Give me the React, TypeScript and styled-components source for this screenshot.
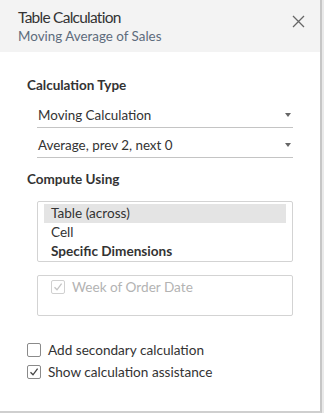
import React from "react";
import styled, { createGlobalStyle } from "styled-components";

const Global = createGlobalStyle`
  html, body { margin: 0; padding: 0; }
  body { background: #e9e9e9; font-family: Lato, "Noto Sans", sans-serif; color: #333; }
`;

const Page = styled.div`
  display: flex;
  width: 324px;
  height: 413px;
`;

const Panel = styled.div`
  width: 320px;
  height: 411px;
  background: #fff;
  border-right: 2px solid #c6c6c6;
  border-bottom: 2px solid #cfcfcf;
  display: flex;
  flex-direction: column;
`;

const Header = styled.div`
  background: #f3f3f3;
  height: 52px;
  padding: 6px 14px 0 18px;
  box-sizing: border-box;
  display: flex;
  justify-content: space-between;
`;

const Titles = styled.div`
  display: flex;
  flex-direction: column;
`;

const Title = styled.div`
  font-size: 15.5px;
  font-weight: 400;
  letter-spacing: -0.75px;
  line-height: 22px;
  color: #333;
`;

const Subtitle = styled.div`
  font-size: 13.4px;
  line-height: 16px;
  color: #5d6b7c;
`;

const Close = styled.div`
  padding-top: 6px;
  width: 14px;
  height: 14px;
`;

const Body = styled.div`
  padding: 25px 27px 0 27px;
  display: flex;
  flex-direction: column;
  font-size: 13.5px;
`;

const Section = styled.div<{ $mt?: number; $mb?: number }>`
  font-weight: 700;
  font-size: 13.5px;
  line-height: 16px;
  color: #333;
  margin-top: ${(p) => p.$mt ?? 0}px;
  margin-bottom: ${(p) => p.$mb ?? 0}px;
`;

const Select = styled.div`
  margin-left: 10px;
  width: 256px;
  height: 30px;
  box-sizing: border-box;
  border-bottom: 1px solid #c4c4c4;
  display: flex;
  align-items: center;
  justify-content: space-between;
  padding: 4px 2px 0 1px;
  font-size: 13.4px;
  color: #333;
`;

const Arrow = styled.span`
  width: 0;
  height: 0;
  border-left: 3.5px solid transparent;
  border-right: 3.5px solid transparent;
  border-top: 4px solid #666;
`;

const ListBox = styled.div`
  margin-left: 10px;
  width: 256px;
  box-sizing: border-box;
  border: 1px solid #d3d3d3;
  border-radius: 2px;
  padding: 2px 6px 0 6px;
  display: flex;
  flex-direction: column;
`;

const Item = styled.div<{ $selected?: boolean; $bold?: boolean }>`
  height: 19px;
  line-height: 19px;
  padding-left: 7px;
  font-size: 13.6px;
  font-weight: ${(p) => (p.$bold ? 700 : 400)};
  background: ${(p) => (p.$selected ? "#e4e4e4" : "transparent")};
  color: #333;
`;

const DimBox = styled.div`
  margin-left: 10px;
  margin-top: 13px;
  width: 256px;
  height: 41px;
  box-sizing: border-box;
  border: 1px solid #d3d3d3;
  border-radius: 2px;
  padding: 0 13px;
`;

const CheckRow = styled.div<{ $disabled?: boolean }>`
  display: flex;
  align-items: center;
  gap: 7px;
  height: 22px;
  font-size: 13.6px;
  color: ${(p) => (p.$disabled ? "#b3b3b3" : "#333")};
`;

const Box = styled.span<{ $disabled?: boolean }>`
  width: 14px;
  height: 14px;
  box-sizing: border-box;
  border: 1px solid ${(p) => (p.$disabled ? "#d0d0d0" : "#8a8a8a")};
  border-radius: 2px;
  background: #fff;
  display: flex;
  align-items: center;
  justify-content: center;
`;

const Bottom = styled.div`
  margin-top: 23px;
  display: flex;
  flex-direction: column;
`;

const Check = ({ color }: { color: string }) => (
  <svg width="10" height="10" viewBox="0 0 10 10">
    <path d="M1.5 5.2 L4 7.8 L8.6 1.6" fill="none" stroke={color} strokeWidth="1.3" />
  </svg>
);

const Checkbox = ({
  checked,
  disabled,
  label,
}: {
  checked?: boolean;
  disabled?: boolean;
  label: string;
}) => (
  <CheckRow $disabled={disabled}>
    <Box $disabled={disabled}>{checked && <Check color={disabled ? "#c4c4c4" : "#444"} />}</Box>
    {label}
  </CheckRow>
);

export default function App() {
  return (
    <Page>
      <Global />
      <Panel>
        <Header>
          <Titles>
            <Title>Table Calculation</Title>
            <Subtitle>Moving Average of Sales</Subtitle>
          </Titles>
          <Close>
            <svg width="13" height="13" viewBox="0 0 13 13">
              <path d="M1 1 L12 12 M12 1 L1 12" stroke="#666" strokeWidth="1.3" fill="none" />
            </svg>
          </Close>
        </Header>
        <Body>
          <Section $mb={5}>Calculation Type</Section>
          <Select>
            Moving Calculation
            <Arrow />
          </Select>
          <Select>
            Average, prev 2, next 0
            <Arrow />
          </Select>
          <Section $mt={13} $mb={14}>Compute Using</Section>
          <ListBox>
            <Item $selected>Table (across)</Item>
            <Item>Cell</Item>
            <Item $bold>Specific Dimensions</Item>
          </ListBox>
          <DimBox>
            <Checkbox checked disabled label="Week of Order Date" />
          </DimBox>
          <Bottom>
            <Checkbox label="Add secondary calculation" />
            <Checkbox checked label="Show calculation assistance" />
          </Bottom>
        </Body>
      </Panel>
    </Page>
  );
}
